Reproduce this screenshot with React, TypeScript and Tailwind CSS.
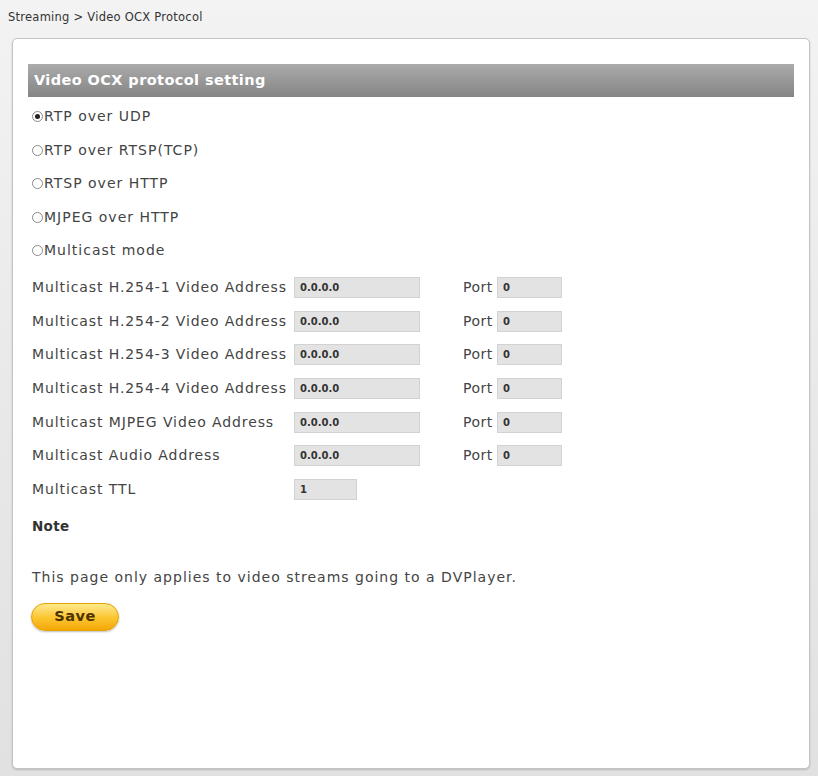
import { ReactNode } from 'react'

const font = { fontFamily: '"DejaVu Sans", Verdana, sans-serif' }

// ── Radio ─────────────────────────────────────────────────────────────────────
function Radio({ checked, label }: { checked?: boolean; label: string }) {
  return (
    <div className="h-[33.5px] flex items-center pl-[4px]">
      <span className="w-[11px] h-[11px] rounded-full border border-[#8a8a8a] bg-white flex items-center justify-center mr-[1px]">
        {checked && <span className="w-[5px] h-[5px] rounded-full bg-[#222]" />}
      </span>
      <span className="text-[14px] tracking-[1px] text-[#444]">{label}</span>
    </div>
  )
}

// ── Field ─────────────────────────────────────────────────────────────────────
function Field({ value, width }: { value: string; width: string }) {
  return (
    <div
      className={`${width} h-[21px] bg-[#e3e3e3] border border-[#d2d2d2] flex items-center pl-[5px] text-[10px] font-bold text-[#333]`}
    >
      {value}
    </div>
  )
}

function Row({ label, children }: { label: string; children: ReactNode }) {
  return (
    <div className="h-[33.7px] flex items-center">
      <span className="w-[262px] shrink-0 text-[14px] tracking-[0.9px] text-[#444] whitespace-nowrap">
        {label}
      </span>
      {children}
    </div>
  )
}

function AddressRow({ label }: { label: string }) {
  return (
    <Row label={label}>
      <Field value="0.0.0.0" width="w-[126px]" />
      <span className="ml-[43px] w-[34px] text-[14px] tracking-[0.5px] text-[#444]">Port</span>
      <Field value="0" width="w-[65px]" />
    </Row>
  )
}

export default function App() {
  return (
    <div
      className="w-[818px] h-[776px] bg-gradient-to-b from-[#f3f3f3] via-[#e9e9e9] to-[#e1e1e1] flex flex-col"
      style={font}
    >
      <div className="h-[38px] pl-[8px] pt-[9px] text-[11.5px] tracking-[0.25px] text-[#333]">
        Streaming &gt; Video OCX Protocol
      </div>

      <div className="ml-[12px] w-[798px] h-[731px] bg-white border border-[#c4c4c4] rounded-[5px] shadow-[0_1px_2px_rgba(0,0,0,0.18)] px-[15px] pt-[25px]">
        <div className="h-[33px] bg-gradient-to-b from-[#ababab] to-[#858585] flex items-center pl-[6px] text-white font-bold text-[14.5px] tracking-[0.4px]">
          Video OCX protocol setting
        </div>

        <div className="pt-[3px]">
          <Radio checked label="RTP over UDP" />
          <Radio label="RTP over RTSP(TCP)" />
          <Radio label="RTSP over HTTP" />
          <Radio label="MJPEG over HTTP" />
          <Radio label="Multicast mode" />
        </div>

        <div className="pt-[3px] pl-[4px]">
          <AddressRow label="Multicast H.254-1 Video Address" />
          <AddressRow label="Multicast H.254-2 Video Address" />
          <AddressRow label="Multicast H.254-3 Video Address" />
          <AddressRow label="Multicast H.254-4 Video Address" />
          <AddressRow label="Multicast MJPEG Video Address" />
          <AddressRow label="Multicast Audio Address" />
          <Row label="Multicast TTL">
            <Field value="1" width="w-[63px]" />
          </Row>

          <div className="h-[38px] flex items-center pt-[2px] text-[13.5px] tracking-[0.3px] font-bold text-[#333]">
            Note
          </div>
          <div className="h-[52px] flex items-center pt-[14px] text-[14px] tracking-[1px] text-[#444]">
            This page only applies to video streams going to a DVPlayer.
          </div>
        </div>

        <button
          type="button"
          className="ml-[3px] mt-[7px] w-[88px] h-[28px] rounded-full border border-[#e3a400] bg-gradient-to-b from-[#fde98a] via-[#fcc730] to-[#f4a700] shadow-[0_1px_2px_rgba(0,0,0,0.25)] text-[14.5px] tracking-[0.5px] font-bold text-[#4b3300]"
        >
          Save
        </button>
      </div>
    </div>
  )
}
